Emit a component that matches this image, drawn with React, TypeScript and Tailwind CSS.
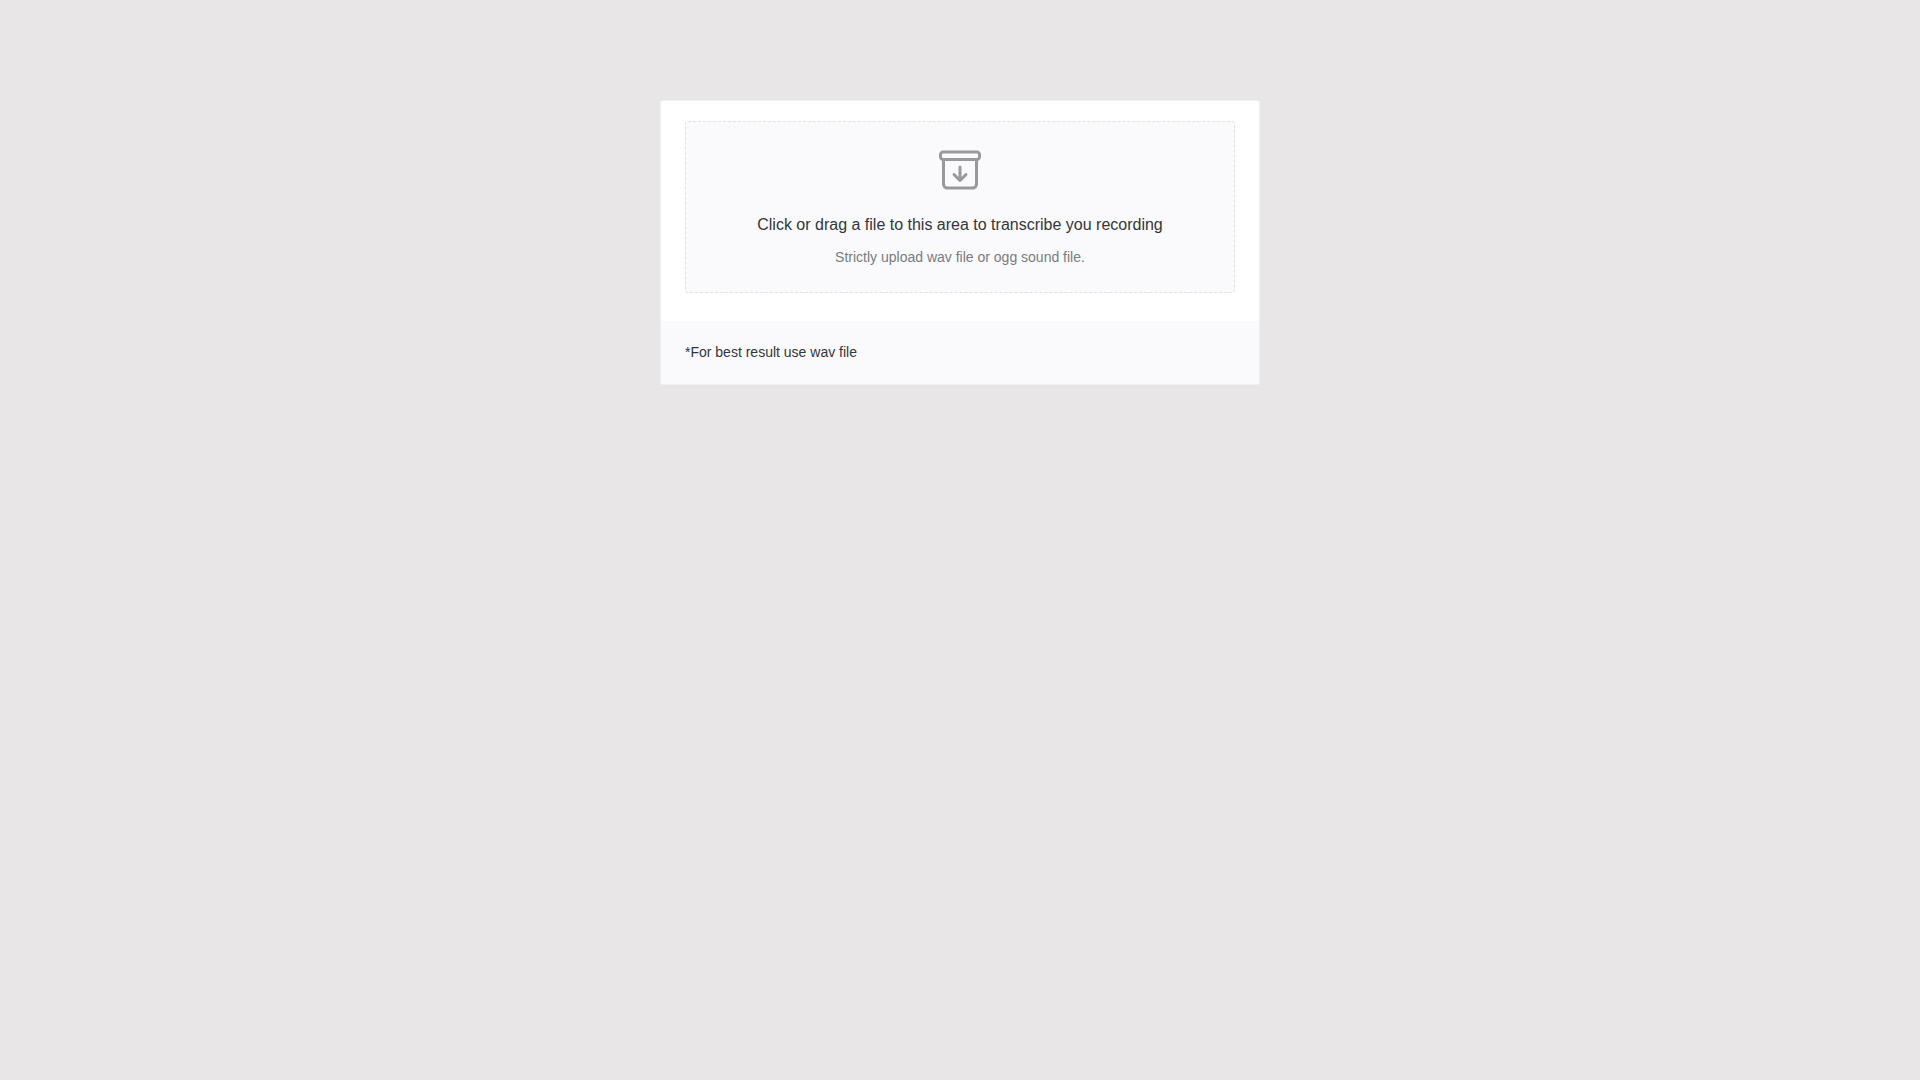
import { ChangeEvent, DragEvent, useState } from 'react';

const ArchiveIcon = () => (
	<svg
		viewBox="0 0 512 512"
		fill="none"
		stroke="currentColor"
		strokeWidth="32"
		strokeLinejoin="round"
		className="size-12 text-[#999999]"
		aria-hidden="true"
	>
		<path d="M80 152v256a40.12 40.12 0 0 0 40 40h272a40.12 40.12 0 0 0 40-40V152" />
		<rect x="48" y="64" width="416" height="80" rx="28" ry="28" />
		<path strokeLinecap="round" d="M320 304l-64 64-64-64" />
		<path strokeLinecap="round" d="M256 345.89V224" />
	</svg>
);

interface UploadAreaProps {
	onSelect: (file: File) => void;
}

const UploadArea = ({ onSelect }: UploadAreaProps) => {
	const handleChange = (e: ChangeEvent<HTMLInputElement>) => {
		const selected = e.target.files?.[0];
		if (selected) {
			onSelect(selected);
		}
	};

	const handleDrop = (e: DragEvent<HTMLLabelElement>) => {
		e.preventDefault();
		const dropped = e.dataTransfer.files[0];
		if (dropped) {
			onSelect(dropped);
		}
	};

	return (
		<label
			htmlFor="recording"
			onDragOver={(e) => e.preventDefault()}
			onDrop={handleDrop}
			className="relative flex flex-col items-center p-6 text-center bg-[#fafafc] border border-dashed border-[#e0e0e6] rounded-[3px] cursor-pointer transition-colors hover:border-[#18a058] focus-within:border-[#18a058]"
		>
			<input
				id="recording"
				type="file"
				accept=".wav,.ogg"
				onChange={handleChange}
				className="sr-only"
			/>
			<ArchiveIcon />
			<span className="mt-[18px] text-base leading-[26px] text-[#333639]">
				Click or drag a file to this area to transcribe you recording
			</span>
			<span className="mt-2 text-sm leading-[22px] text-[#767c82]">
				Strictly upload wav file or ogg sound file.
			</span>
		</label>
	);
};

const App = () => {
	const [file, setFile] = useState<File | null>(null);

	return (
		<main className="min-h-screen px-4 py-25 bg-[#e8e6e7] font-['Liberation_Sans',Arial,sans-serif]">
			<section className="max-w-150 mx-auto overflow-hidden bg-white border border-[#efeff5] rounded-[3px]">
				<div className="px-6 pt-5 pb-7">
					<UploadArea onSelect={setFile} />
					{file && (
						<p className="mt-2 text-sm text-[#333639]">{file.name}</p>
					)}
				</div>
				<footer className="px-6 pt-5 pb-[21px] bg-[#fafafc] text-sm leading-[22px] text-[#333639]">
					*For best result use wav file
				</footer>
			</section>
		</main>
	);
};

export default App;
